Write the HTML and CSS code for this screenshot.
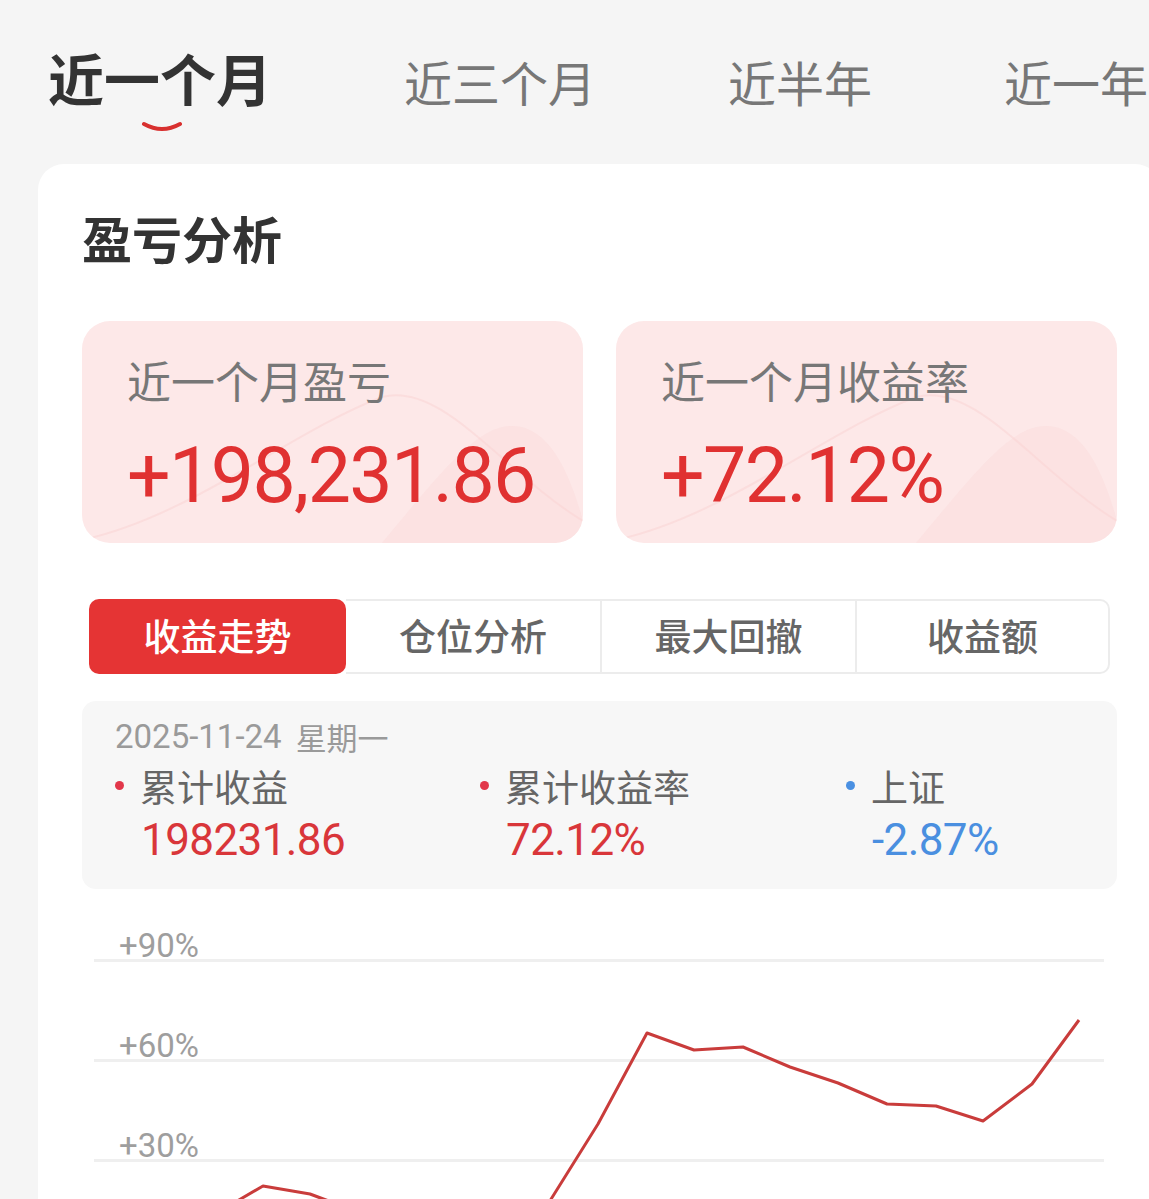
FILE: index.html
```html
<!DOCTYPE html>
<html lang="zh-CN">
<head>
  <meta charset="UTF-8">
  <meta name="viewport" content="width=device-width, initial-scale=1">
  <title>盈亏分析</title>
  <link rel="stylesheet" href="styles.css">
</head>
<body>
  <div class="period-tabs">
    <div class="period-tab active">近一个月
      <svg class="tab-mark" width="42" height="12" viewBox="0 0 42 12"><path d="M3 3 Q21 13 39 3" fill="none" stroke="#d8302f" stroke-width="4" stroke-linecap="round"/></svg>
    </div>
    <div class="period-tab">近三个月</div>
    <div class="period-tab">近半年</div>
    <div class="period-tab">近一年</div>
  </div>

  <div class="panel">
    <h2 class="panel-title">盈亏分析</h2>

    <div class="stat-grid">
      <div class="stat-card">
        <svg class="stat-deco" viewBox="0 0 501 222" preserveAspectRatio="none">
          <path d="M300 222 C360 150 395 105 430 105 C470 105 490 160 501 200 L501 222 Z" fill="#fbdcdc" opacity="0.5"/>
          <path d="M0 219 C110 195 210 110 300 76 C360 60 420 150 501 200" fill="none" stroke="#fad6d6" stroke-width="2" opacity="0.6"/>
        </svg>
        <div class="stat-label">近一个月盈亏</div>
        <div class="stat-value">+198,231.86</div>
      </div>
      <div class="stat-card">
        <svg class="stat-deco" viewBox="0 0 501 222" preserveAspectRatio="none">
          <path d="M300 222 C360 150 395 105 430 105 C470 105 490 160 501 200 L501 222 Z" fill="#fbdcdc" opacity="0.5"/>
          <path d="M0 219 C110 195 210 110 300 76 C360 60 420 150 501 200" fill="none" stroke="#fad6d6" stroke-width="2" opacity="0.6"/>
        </svg>
        <div class="stat-label">近一个月收益率</div>
        <div class="stat-value">+72.12%</div>
      </div>
    </div>

    <div class="seg">
      <div class="seg-item active">收益走势</div>
      <div class="seg-item">仓位分析</div>
      <div class="seg-item">最大回撤</div>
      <div class="seg-item last">收益额</div>
    </div>

    <div class="tip">
      <div class="tip-date">2025-11-24<span class="tip-week">星期一</span></div>
      <div class="tip-cols">
        <div class="tip-col">
          <div class="tip-name"><i class="dot red"></i>累计收益</div>
          <div class="tip-num red">198231.86</div>
        </div>
        <div class="tip-col">
          <div class="tip-name"><i class="dot red"></i>累计收益率</div>
          <div class="tip-num red">72.12%</div>
        </div>
        <div class="tip-col">
          <div class="tip-name"><i class="dot blue"></i>上证</div>
          <div class="tip-num blue">-2.87%</div>
        </div>
      </div>
    </div>

    <div class="chart">
      <div class="grid-row first"><span>+90%</span></div>
      <div class="grid-row"><span>+60%</span></div>
      <div class="grid-row"><span>+30%</span></div>
      <svg class="chart-line" width="1010" height="400" viewBox="0 0 1010 400">
        <polyline fill="none" stroke="#c93c3b" stroke-width="3" stroke-linejoin="round"
          points="72,339 121,313 169,285 216,293 264,311 311,325 359,337 406,331 454,303 504,223 553,132 600,149 649,146 696,166 744,182 793,203 842,205 889,220 938,183 985,119"/>
      </svg>
    </div>
  </div>
</body>
</html>
```

FILE: styles.css
```css
html,
body {
  overflow: hidden;
}

body {
  margin: 0;
  background-color: #f5f5f5;
  font-family: "Noto Sans CJK SC", sans-serif;
  color: #333;
}

/* period tabs */
.period-tabs {
  display: flex;
  align-items: flex-end;
  gap: 132px;
  padding: 49px 0 59px 48px;
  white-space: nowrap;
}

.period-tab {
  position: relative;
  font-size: 48px;
  line-height: 1;
  color: #777;
}

.period-tab.active {
  font-size: 56px;
  font-weight: 700;
  color: #333;
}

.tab-mark {
  position: absolute;
  left: calc(50% - 19px);
  top: calc(100% + 16px);
}

/* panel */
.panel {
  width: 1123px;
  margin-left: 38px;
  box-sizing: border-box;
  padding: 48px 44px 0;
  background: #fff;
  border-radius: 26px 26px 0 0;
}

.panel-title {
  margin: 0 0 59px;
  font-size: 50px;
  line-height: 1;
  font-weight: 700;
  color: #333;
}

.stat-grid {
  display: grid;
  grid-template-columns: 1fr 1fr;
  gap: 33px;
}

.stat-card {
  position: relative;
  height: 222px;
  box-sizing: border-box;
  padding: 37px 0 0 45px;
  background: #fde8e8;
  border-radius: 28px;
  overflow: hidden;
}

.stat-deco {
  position: absolute;
  left: 0;
  top: 0;
  width: 100%;
  height: 100%;
}

.stat-label,
.stat-value {
  position: relative;
}

.stat-label {
  font-size: 44px;
  line-height: 1;
  color: #777;
}

.stat-value {
  margin-top: 36px;
  font-family: "Roboto", sans-serif;
  font-size: 77px;
  letter-spacing: -1.6px;
  line-height: 1;
  color: #e03131;
}

/* segmented control */
.seg {
  display: grid;
  grid-template-columns: 257px 254px 255px 255px;
  height: 75px;
  margin: 56px 7px 0;
}

.seg-item {
  display: flex;
  align-items: center;
  justify-content: center;
  padding-bottom: 3px;
  font-size: 37px;
  font-weight: 500;
  color: #666;
  border-top: 2px solid #ececec;
  border-bottom: 2px solid #ececec;
  border-left: 2px solid #ececec;
}

.seg-item.active {
  border: none;
  border-radius: 10px;
  background: #e53434;
  color: #fff;
}

.seg-item.active + .seg-item {
  border-left: none;
}

.seg-item.last {
  border-right: 2px solid #ececec;
  border-radius: 0 10px 10px 0;
}

/* tooltip box */
.tip {
  margin-top: 27px;
  padding: 14px 0 23px 33px;
  background: #f7f7f7;
  border-radius: 14px;
}

.tip-date {
  height: 42px;
  display: flex;
  align-items: center;
  font-family: "Roboto", "Noto Sans CJK SC", sans-serif;
  font-size: 33px;
  color: #9a9a9a;
}

.tip-week {
  margin-left: 14px;
  font-family: "Noto Sans CJK SC", sans-serif;
  font-size: 31px;
}

.tip-cols {
  display: grid;
  grid-template-columns: 365px 366px 1fr;
}

.tip-name {
  height: 57px;
  display: flex;
  align-items: center;
  font-size: 37px;
  color: #666;
}

.dot {
  width: 9px;
  height: 9px;
  margin-right: 16px;
  border-radius: 50%;
}

.dot.red {
  background: #e2374a;
}

.dot.blue {
  background: #4a90e2;
}

.tip-num {
  height: 52px;
  display: flex;
  align-items: center;
  padding-left: 26px;
  font-family: "Roboto", sans-serif;
  font-size: 44px;
  letter-spacing: -0.6px;
}

.tip-num.red {
  color: #d9363a;
}

.tip-num.blue {
  color: #4a8fe0;
}

/* chart */
.chart {
  position: relative;
  margin: 12px 13px 0 12px;
  height: 400px;
}

.grid-row {
  height: 100px;
  box-sizing: border-box;
  display: flex;
  align-items: flex-end;
  padding-left: 25px;
  border-bottom: 3px solid #efefef;
}

.grid-row.first {
  height: 61px;
}

.grid-row span {
  margin-bottom: -3px;
  font-family: "Roboto", sans-serif;
  font-size: 33px;
  line-height: 1;
  color: #9e9e9e;
}

.chart-line {
  position: absolute;
  left: 0;
  top: 0;
}
```
